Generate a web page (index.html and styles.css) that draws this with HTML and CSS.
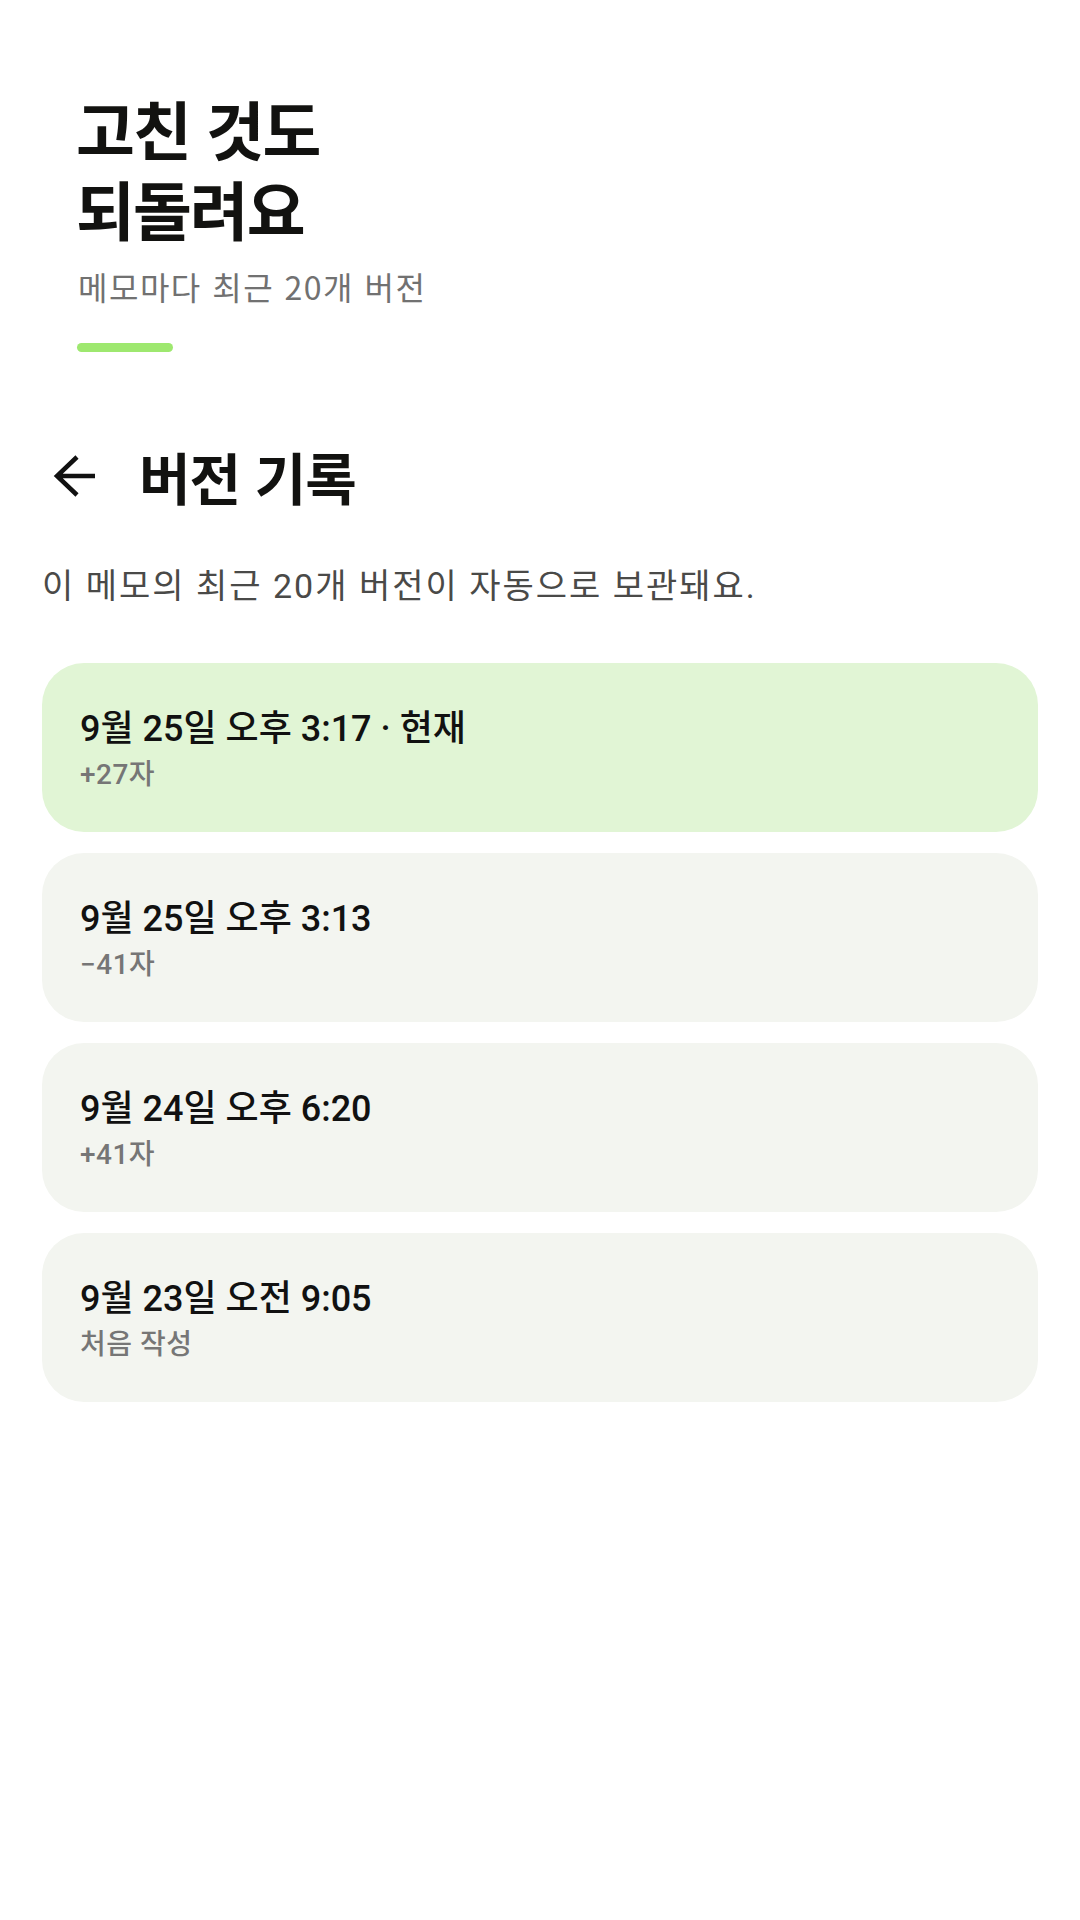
FILE: index.html
```html
<!DOCTYPE html>
<html lang="ko">
<head>
<meta charset="utf-8">
<link rel="stylesheet" href="styles.css">
</head>
<body>
<header class="hero">
  <h1 class="hero-title"><span class="hero-line">고친 것도</span><span class="hero-line">되돌려요</span></h1>
  <p class="hero-sub">메모마다 최근 20개 버전</p>
  <div class="hero-bar"></div>
</header>
<main class="history">
  <div class="history-head">
    <svg class="back" viewBox="0 0 48 48" width="48" height="48" aria-hidden="true">
      <path d="M7 24H45M27 5L7 24L27 43" fill="none" stroke="#111" stroke-width="4.5" stroke-linejoin="miter"/>
    </svg>
    <h2 class="history-title">버전 기록</h2>
  </div>
  <p class="history-desc">이 메모의 최근 20개 버전이 자동으로 보관돼요.</p>
  <ul class="versions">
    <li class="version current">
      <div class="v-title">9월 25일 오후 3:17 · 현재</div>
      <div class="v-meta">+27자</div>
    </li>
    <li class="version">
      <div class="v-title">9월 25일 오후 3:13</div>
      <div class="v-meta">−41자</div>
    </li>
    <li class="version">
      <div class="v-title">9월 24일 오후 6:20</div>
      <div class="v-meta">+41자</div>
    </li>
    <li class="version">
      <div class="v-title">9월 23일 오전 9:05</div>
      <div class="v-meta">처음 작성</div>
    </li>
  </ul>
</main>
</body>
</html>
```
FILE: styles.css
```css
* { box-sizing: border-box; }
html, body {
  margin: 0;
  padding: 0;
  background: #ffffff;
}
body {
  width: 1080px;
  min-height: 1920px;
  font-family: Roboto, "Noto Sans CJK KR", sans-serif;
  color: #111111;
}
.hero {
  padding: 87px 0 0 76px;
}
.hero-title {
  margin: 0;
  font-family: "Noto Sans CJK KR", sans-serif;
  font-size: 64px;
  line-height: 80px;
  font-weight: 700;
  letter-spacing: -2px;
  color: #121210;
}
.hero-line {
  display: block;
  height: 80px;
}
.hero-sub {
  margin: 17px 0 0 2px;
  font-family: "Noto Sans CJK KR", sans-serif;
  font-size: 32px;
  line-height: 44px;
  font-weight: 400;
  color: #717171;
  letter-spacing: 1.5px;
}
.hero-bar {
  margin: 35px 0 0 1px;
  width: 96px;
  height: 9px;
  border-radius: 5px;
  background: #9ee86f;
}
.history {
  padding: 0 42px;
}
.history-head {
  display: flex;
  align-items: center;
  gap: 41px;
  margin-top: 94px;
  height: 60px;
}
.back {
  display: block;
  margin-left: 8px;
  flex: none;
}
.history-title {
  margin: 0;
  font-family: "Noto Sans CJK KR", sans-serif;
  font-size: 56px;
  line-height: 60px;
  font-weight: 700;
  letter-spacing: -1px;
  color: #121210;
}
.history-desc {
  margin: 58px 0 0 0;
  font-family: Roboto, "Noto Sans CJK KR", sans-serif;
  font-size: 34px;
  line-height: 44px;
  color: #4a4a48;
  letter-spacing: 2px;
}
.versions {
  list-style: none;
  margin: 55px 0 0 0;
  padding: 0;
  display: flex;
  flex-direction: column;
  gap: 21px;
}
.version {
  height: 169px;
  border-radius: 42px;
  background: #f3f5f0;
  padding: 4px 38px 0;
  display: flex;
  flex-direction: column;
  justify-content: center;
}
.version.current {
  background: #e1f5d5;
}
.v-title {
  font-size: 36px;
  line-height: 44px;
  font-weight: 500;
  color: #111111;
}
.v-meta {
  margin-top: 6px;
  font-size: 28px;
  line-height: 36px;
  font-weight: 500;
  color: #767676;
  letter-spacing: 0.5px;
}
```
